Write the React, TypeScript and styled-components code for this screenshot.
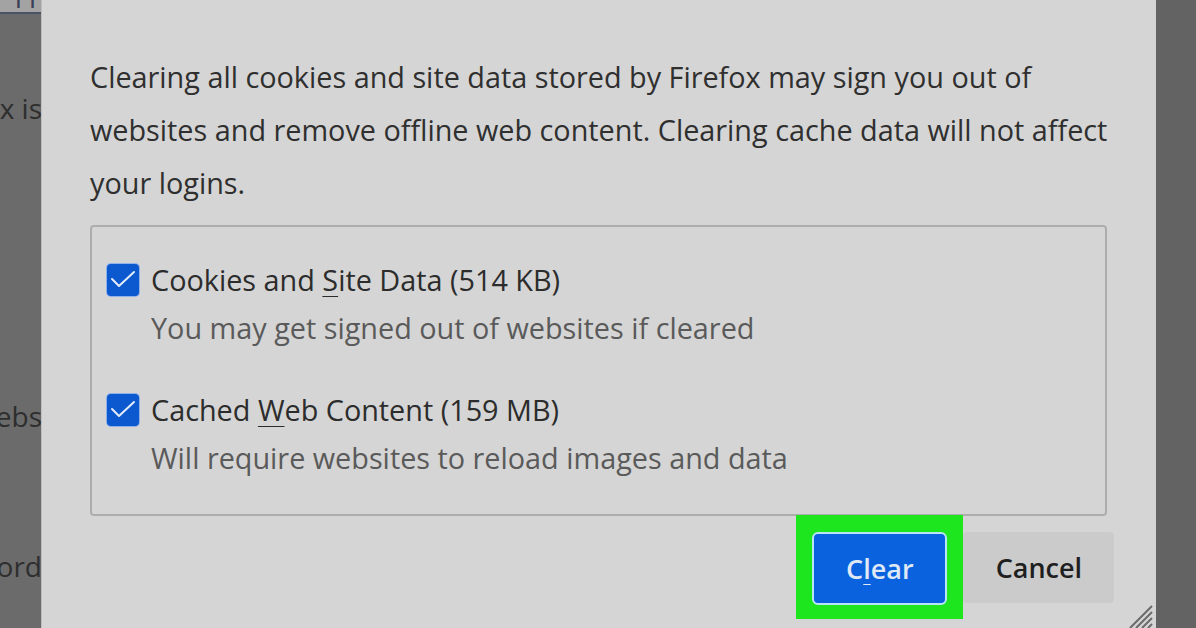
import React from "react";
import styled, { createGlobalStyle } from "styled-components";

const FONT = `"Open Sans", "Noto Sans", "Liberation Sans", sans-serif`;

const GlobalStyle = createGlobalStyle`
  html, body {
    margin: 0;
    padding: 0;
    height: 100%;
    overflow: hidden;
  }
  body {
    font-family: ${FONT};
    background: #646464;
  }
  #root {
    height: 100%;
  }
`;

const Screen = styled.div`
  display: flex;
  width: 1196px;
  height: 628px;
  overflow: hidden;
`;

const Backdrop = styled.div<{ $width: number; $tone: string }>`
  flex: 0 0 ${({ $width }) => $width}px;
  background: ${({ $tone }) => $tone};
  display: flex;
  flex-direction: column;
  overflow: hidden;
`;

const PageTop = styled.div`
  height: 12px;
  background: #a3a3a3;
  border-bottom: 2px solid #4c5366;
  overflow: hidden;
  display: flex;
  justify-content: flex-end;
`;

const PageTopText = styled.span`
  font-size: 28px;
  line-height: 28px;
  margin-top: -17px;
  color: #3a3f55;
  white-space: nowrap;
  padding-right: 6px;
`;

const PageLine = styled.div<{ $gap: number }>`
  margin-top: ${({ $gap }) => $gap}px;
  height: 40px;
  display: flex;
  align-items: center;
  justify-content: flex-end;
  overflow: hidden;
  font-size: 28px;
  color: #2e2e2e;
  white-space: nowrap;
`;

const Dialog = styled.div`
  flex: 1;
  position: relative;
  background: #d5d5d5;
  box-shadow: -1px 0 0 #bdbdbd;
  padding: 50px 49px 0 48px;
  display: flex;
  flex-direction: column;
  font-family: ${FONT};
`;

const Intro = styled.p`
  margin: 0;
  font-size: 28.8px;
  line-height: 53px;
  color: #2f2f2f;
  white-space: nowrap;
`;

const GroupBox = styled.div`
  margin-top: 16px;
  height: 291px;
  box-sizing: border-box;
  border: 2px solid #adadad;
  border-radius: 4px;
  padding: 36px 0 0 15px;
  display: flex;
  flex-direction: column;
  gap: 48px;
`;

const Option = styled.div`
  display: grid;
  grid-template-columns: 32px 1fr;
  column-gap: 12px;
  align-items: center;
`;

const Box = styled.span`
  width: 32px;
  height: 32px;
  border-radius: 4px;
  background: #0c58cf;
  box-shadow: 0 0 0 1px #8fb1ea;
  display: flex;
  align-items: center;
  justify-content: center;
`;

const OptionLabel = styled.span`
  font-size: 28.8px;
  line-height: 34px;
  color: #2c2c2c;
  white-space: nowrap;
`;

const OptionHint = styled.span`
  grid-column: 2;
  font-size: 28.8px;
  line-height: 34px;
  margin-top: 14px;
  color: #5a5a5a;
  white-space: nowrap;
`;

const Key = styled.span`
  text-decoration: underline;
  text-underline-offset: 5px;
  text-decoration-thickness: 1px;
`;

const Actions = styled.div`
  display: flex;
  justify-content: flex-end;
  align-items: flex-start;
  margin-top: -1px;
  margin-right: -7px;
`;

const Highlight = styled.div`
  background: #1ee61e;
  padding: 17px 16px 14px 16px;
  display: flex;
`;

const PrimaryButton = styled.button`
  width: 135px;
  height: 73px;
  box-sizing: border-box;
  border: 2px solid #b9e4f4;
  border-radius: 6px;
  background: #0b62df;
  color: #dfe9f6;
  font-family: ${FONT};
  font-size: 27px;
  font-weight: 600;
  cursor: pointer;
`;

const SecondaryButton = styled.button`
  margin-top: 17px;
  width: 151px;
  height: 71px;
  border: none;
  border-radius: 4px;
  background: #cbcbcb;
  color: #1f1f1f;
  font-family: ${FONT};
  font-size: 27px;
  font-weight: 600;
  cursor: pointer;
`;

const Grip = styled.svg`
  position: absolute;
  right: 2px;
  bottom: 0;
`;

const Check = () => (
  <svg width="28" height="28" viewBox="0 0 28 28">
    <polyline
      points="3,13 10,20 25,6"
      fill="none"
      stroke="#e3ecfb"
      strokeWidth="2"
      strokeLinecap="round"
      strokeLinejoin="round"
    />
  </svg>
);

const options = [
  {
    before: "Cookies and ",
    key: "S",
    after: "ite Data (514 KB)",
    hint: "You may get signed out of websites if cleared",
  },
  {
    before: "Cached ",
    key: "W",
    after: "eb Content (159 MB)",
    hint: "Will require websites to reload images and data",
  },
];

export default function App() {
  return (
    <>
      <GlobalStyle />
      <Screen>
        <Backdrop $width={42} $tone="#6b6b6b">
          <PageTop>
            <PageTopText>Fi</PageTopText>
          </PageTop>
          <PageLine $gap={74}>Firefox is</PageLine>
          <PageLine $gap={268}>websites webs</PageLine>
          <PageLine $gap={110}>password</PageLine>
        </Backdrop>

        <Dialog>
          <Intro>
            Clearing all cookies and site data stored by Firefox may sign you out of
            <br />
            websites and remove offline web content. Clearing cache data will not affect
            <br />
            your logins.
          </Intro>

          <GroupBox>
            {options.map((o) => (
              <Option key={o.key}>
                <Box>
                  <Check />
                </Box>
                <OptionLabel>
                  {o.before}
                  <Key>{o.key}</Key>
                  {o.after}
                </OptionLabel>
                <OptionHint>{o.hint}</OptionHint>
              </Option>
            ))}
          </GroupBox>

          <Actions>
            <Highlight>
              <PrimaryButton>
                C<Key>l</Key>ear
              </PrimaryButton>
            </Highlight>
            <SecondaryButton>Cancel</SecondaryButton>
          </Actions>

          <Grip width="32" height="32" viewBox="0 0 32 32">
            <g stroke="#6a6a6a" strokeWidth="2">
              <line x1="30" y1="10" x2="8" y2="32" />
              <line x1="30" y1="16" x2="14" y2="32" />
              <line x1="30" y1="22" x2="20" y2="32" />
              <line x1="30" y1="28" x2="26" y2="32" />
            </g>
          </Grip>
        </Dialog>

        <Backdrop $width={41} $tone="#636363" />
      </Screen>
    </>
  );
}
